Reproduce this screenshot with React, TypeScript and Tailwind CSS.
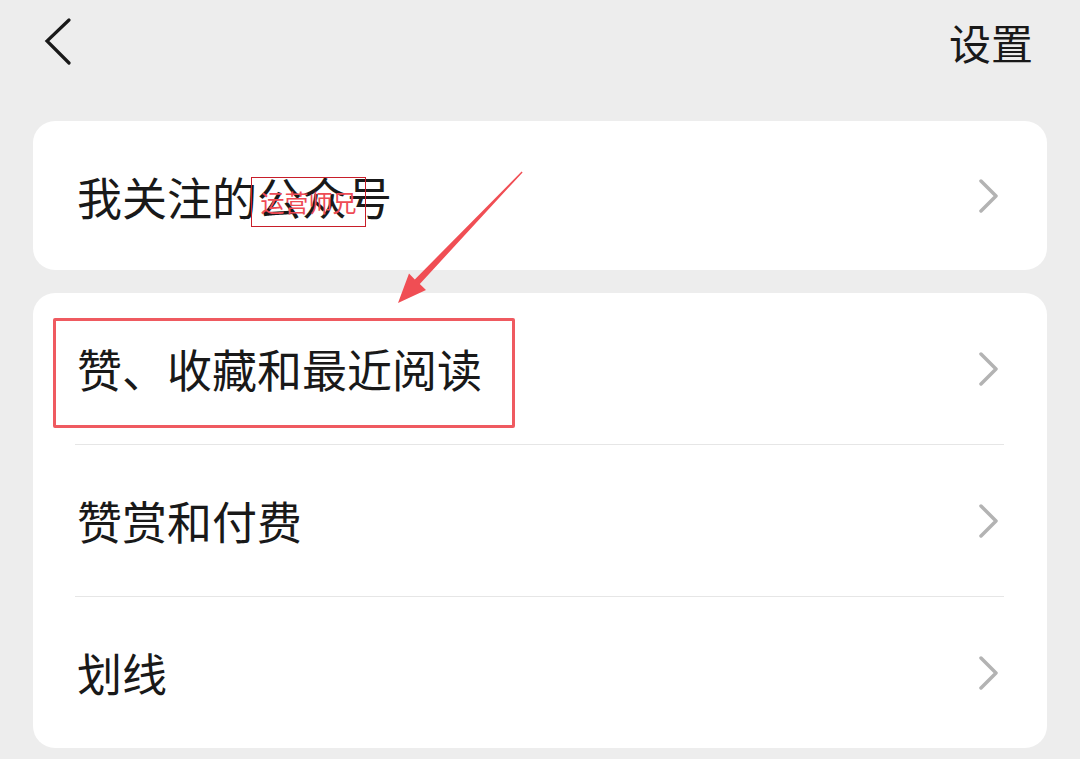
import React from "react";

const font = { fontFamily: '"Noto Sans CJK SC", "Noto Sans", sans-serif' };

function Chevron() {
  return (
    <svg width="22" height="34" viewBox="0 0 22 34" className="shrink-0">
      <polyline
        points="3,2 18,17 3,32"
        fill="none"
        stroke="#b3b3b3"
        strokeWidth="3.5"
        strokeLinecap="round"
        strokeLinejoin="round"
      />
    </svg>
  );
}

function Row({ label, children }: { label: string; children?: React.ReactNode }) {
  return (
    <div className="relative h-[151px] flex items-center justify-between pl-[44px] pr-[47px]">
      <span className="text-[45px] leading-none text-[#191919]">{label}</span>
      <Chevron />
      {children}
    </div>
  );
}

export default function App() {
  return (
    <div className="relative w-[1080px] h-[759px] overflow-hidden bg-[#ededed]" style={font}>
      {/* 顶部栏 */}
      <div className="h-[84px] flex items-center justify-between pl-[44px] pr-[47px]">
        <svg width="28" height="48" viewBox="0 0 28 48">
          <polyline
            points="25,2 3,23 25,45"
            fill="none"
            stroke="#191919"
            strokeWidth="3.2"
            strokeLinecap="round"
            strokeLinejoin="miter"
          />
        </svg>
        <span className="text-[42px] leading-none text-[#191919]">设置</span>
      </div>

      <div className="px-[33px] pt-[37px] flex flex-col gap-[23px]">
        {/* 我关注的公众号 */}
        <div className="bg-white rounded-[22px]">
          <div className="relative h-[149px] flex items-center justify-between pl-[44px] pr-[47px]">
            <span className="text-[45px] leading-none text-[#191919] mt-[2px]">我关注的公众号</span>
            <Chevron />
            <div className="absolute left-[218px] top-[56px] w-[115px] h-[50px] border border-[#c81e2a] flex items-center justify-center">
              <span className="text-[24px] leading-none text-[#ee4b55]">运营师兄</span>
            </div>
          </div>
        </div>

        {/* 列表 */}
        <div className="bg-white rounded-[22px]">
          <Row label="赞、收藏和最近阅读">
            <div className="absolute left-[20px] top-[25px] w-[462px] h-[110px] border-[3px] border-[#ef5a60] rounded-[2px]" />
          </Row>
          <div className="ml-[42px] mr-[43px] border-t border-[#e6e6e6]" />
          <Row label="赞赏和付费" />
          <div className="ml-[42px] mr-[43px] border-t border-[#e6e6e6]" />
          <Row label="划线" />
        </div>
      </div>

      {/* 箭头 */}
      <svg className="absolute left-0 top-0 pointer-events-none" width="1080" height="759">
        <polygon
          points="522.6,172.4 419.8,284 426,290 398,303 409,273.5 414.8,279.4 521.6,171.6"
          fill="#f04e54"
        />
      </svg>
    </div>
  );
}
